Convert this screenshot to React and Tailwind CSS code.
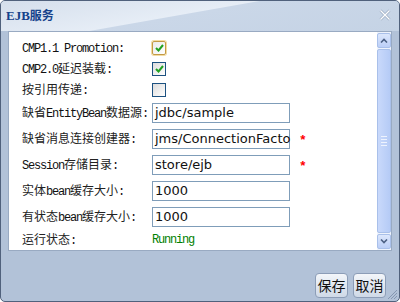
import { Fragment } from 'react'

const CJK = '"Noto Sans CJK SC", "Noto Sans", sans-serif'

// split a label into ascii / cjk runs so latin gets the narrow mono look
function Mixed({ text }) {
  const parts = text.match(/[\x00-\x7f]+|[^\x00-\x7f]+/g) || []
  return parts.map((p, i) =>
    /^[\x00-\x7f]/.test(p) ? (
      <span key={i} className="font-['Liberation_Mono',monospace] text-[12px] tracking-[-1.2px] text-[#111]">
        {p}
      </span>
    ) : (
      <Fragment key={i}>{p}</Fragment>
    )
  )
}

function Check({ checked, focus }) {
  return (
    <div
      className={
        focus
          ? 'grid h-[14px] w-[14px] place-items-center rounded-[2px] border border-[#c39a45] bg-gradient-to-br from-[#eaeaea] to-white shadow-[0_0_0_1px_#f3dca2]'
          : 'grid h-[14px] w-[14px] place-items-center border border-[#1c5180] bg-gradient-to-br from-[#dcdcdc] to-white'
      }
    >
      {checked ? (
        <svg width="9" height="8" viewBox="0 0 9 8">
          <path d="M1 4 L3.5 6.5 L8 1" fill="none" stroke="#21a121" strokeWidth="2" />
        </svg>
      ) : null}
    </div>
  )
}

function Field({ value, required }) {
  return (
    <div className="flex items-center">
      <div className="flex h-[20px] w-[138px] items-center whitespace-nowrap border border-[#7f9db9] bg-white px-[2px] font-['DejaVu_Sans',sans-serif] text-[13px] text-[#111]">
        {value}
      </div>
      {required ? <span className="ml-[9px] mt-[4px] font-['Liberation_Mono',monospace] text-[13px] font-bold text-[#ff0000]">*</span> : null}
    </div>
  )
}

const ROWS = [
  { label: 'CMP1.1 Promotion:', h: 'h-[21px]', ctrl: <Check checked focus /> },
  { label: 'CMP2.0延迟装载:', h: 'h-[21px]', ctrl: <Check checked /> },
  { label: '按引用传递:', h: 'h-[21px]', ctrl: <Check /> },
  { label: '缺省EntityBean数据源:', h: 'h-[26px]', ctrl: <Field value="jdbc/sample" /> },
  { label: '缺省消息连接创建器:', h: 'h-[26px]', ctrl: <Field value="jms/ConnectionFacto" required /> },
  { label: 'Session存储目录:', h: 'h-[26px]', ctrl: <Field value="store/ejb" required /> },
  { label: '实体bean缓存大小:', h: 'h-[26px]', ctrl: <Field value="1000" /> },
  { label: '有状态bean缓存大小:', h: 'h-[26px]', ctrl: <Field value="1000" /> },
  {
    label: '运行状态:',
    h: 'h-[20px]',
    ctrl: <span className="font-['Liberation_Mono',monospace] text-[12px] tracking-[-1.2px] text-[#008000]">Running</span>,
  },
]

function Scrollbar() {
  return (
    <div className="flex w-[14px] flex-col gap-[1px] bg-[#eef3fc] py-[1px]">
      <div className="grid h-[15px] place-items-center rounded-[2px] border border-[#a9c0ea] bg-gradient-to-b from-[#dce7fc] to-[#bccff7]">
        <svg width="8" height="5" viewBox="0 0 8 5">
          <path d="M1 4.5 L4 1.5 L7 4.5" fill="none" stroke="#4d6185" strokeWidth="1.6" />
        </svg>
      </div>
      <div className="flex flex-1 flex-col items-center justify-center gap-[2px] rounded-[2px] border border-[#a9c0ea] bg-gradient-to-r from-[#c9d9fb] to-[#b5cbf6]">
        <div className="h-px w-[6px] bg-[#eef3fe]" />
        <div className="h-px w-[6px] bg-[#eef3fe]" />
        <div className="h-px w-[6px] bg-[#eef3fe]" />
        <div className="h-px w-[6px] bg-[#eef3fe]" />
      </div>
      <div className="grid h-[15px] place-items-center rounded-[2px] border border-[#a9c0ea] bg-gradient-to-b from-[#dce7fc] to-[#bccff7]">
        <svg width="8" height="5" viewBox="0 0 8 5">
          <path d="M1 0.5 L4 3.5 L7 0.5" fill="none" stroke="#4d6185" strokeWidth="1.6" />
        </svg>
      </div>
    </div>
  )
}

function Btn({ children }) {
  return (
    <button
      type="button"
      className="h-[25px] w-[33px] rounded-[4px] border border-[#8c9db7] bg-gradient-to-b from-[#f3f6fa] to-[#cfd9e7] text-[14px] leading-none text-[#111]"
      style={{ fontFamily: CJK }}
    >
      {children}
    </button>
  )
}

export default function App() {
  return (
    <div className="h-[302px] w-[400px] bg-white">
      <div className="relative flex h-full w-full flex-col overflow-hidden rounded-[5px] border border-[#50617c] bg-[#b2c2d8]">
        <div className="flex h-[30px] shrink-0 items-center justify-between bg-[linear-gradient(170deg,#d5dfec_0%,#e6edf6_45%,#cad7e8_46%,#c5d3e5_100%)] pl-[5px] pr-[8px]">
          <span className="text-[12px] font-bold text-[#15428b]" style={{ fontFamily: CJK }}>
            <span className="font-['Liberation_Serif',serif] text-[13px]">EJB</span>服务
          </span>
          <svg width="12" height="12" viewBox="0 0 12 12" className="mb-[2px]">
            <path d="M1.5 1.5 L10.5 10.5 M10.5 1.5 L1.5 10.5" stroke="#9aaac0" strokeWidth="2.6" />
            <path d="M1.5 1.5 L10.5 10.5 M10.5 1.5 L1.5 10.5" stroke="#ffffff" strokeWidth="1.3" />
          </svg>
        </div>

        <div className="mx-[7px] flex h-[220px] border border-[#99aac2] bg-white">
          <div className="flex flex-1 flex-col pl-[13px] pt-[5px] text-[12px] text-[#222]" style={{ fontFamily: CJK }}>
            {ROWS.map((row) => (
              <div key={row.label} className={`flex items-center ${row.h}`}>
                <div className="w-[130px] shrink-0 whitespace-nowrap">
                  <Mixed text={row.label} />
                </div>
                {row.ctrl}
              </div>
            ))}
          </div>
          <Scrollbar />
        </div>

        <div className="flex flex-1 items-center justify-end gap-[5px] pr-[13px] pt-[18px]">
          <Btn>保存</Btn>
          <Btn>取消</Btn>
        </div>

        <svg width="10" height="10" viewBox="0 0 10 10" className="absolute bottom-[1px] right-[1px]">
          <path d="M9 3 L3 9 M9 6 L6 9 M9 0 L0 9" stroke="#8597b2" strokeWidth="1" />
        </svg>
      </div>
    </div>
  )
}
